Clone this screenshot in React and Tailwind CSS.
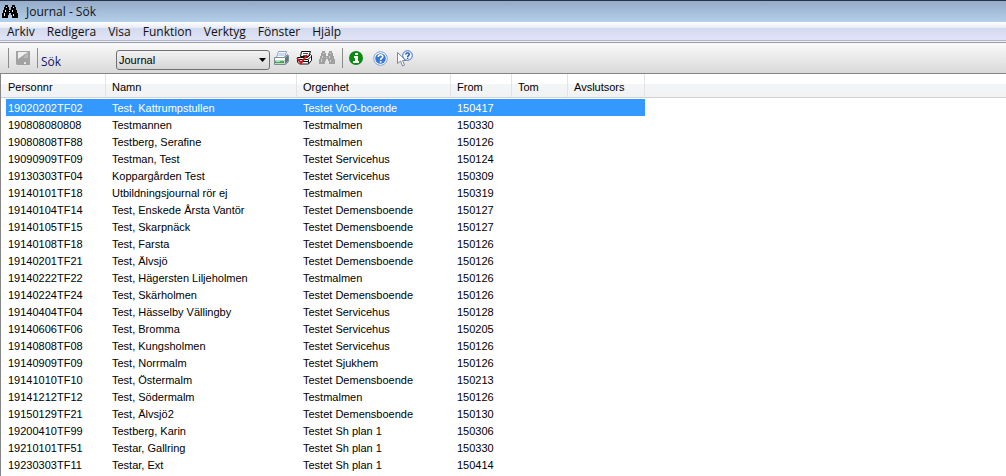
import { useState } from "react";

const MENU = ["Arkiv", "Redigera", "Visa", "Funktion", "Verktyg", "Fönster", "Hjälp"];

const COLUMNS = ["Personnr", "Namn", "Orgenhet", "From", "Tom", "Avslutsors"];

const ROWS = [
  ["19020202TF02", "Test, Kattrumpstullen", "Testet VoO-boende", "150417"],
  ["190808080808", "Testmannen", "Testmalmen", "150330"],
  ["19080808TF88", "Testberg, Serafine", "Testmalmen", "150126"],
  ["19090909TF09", "Testman, Test", "Testet Servicehus", "150124"],
  ["19130303TF04", "Koppargården Test", "Testet Servicehus", "150309"],
  ["19140101TF18", "Utbildningsjournal rör ej", "Testmalmen", "150319"],
  ["19140104TF14", "Test, Enskede Årsta Vantör", "Testet Demensboende", "150127"],
  ["19140105TF15", "Test, Skarpnäck", "Testet Demensboende", "150127"],
  ["19140108TF18", "Test, Farsta", "Testet Demensboende", "150126"],
  ["19140201TF21", "Test, Älvsjö", "Testet Demensboende", "150126"],
  ["19140222TF22", "Test, Hägersten Liljeholmen", "Testmalmen", "150126"],
  ["19140224TF24", "Test, Skärholmen", "Testet Demensboende", "150126"],
  ["19140404TF04", "Test, Hässelby Vällingby", "Testet Servicehus", "150128"],
  ["19140606TF06", "Test, Bromma", "Testet Servicehus", "150205"],
  ["19140808TF08", "Test, Kungsholmen", "Testet Servicehus", "150126"],
  ["19140909TF09", "Test, Norrmalm", "Testet Sjukhem", "150126"],
  ["19141010TF10", "Test, Östermalm", "Testet Demensboende", "150213"],
  ["19141212TF12", "Test, Södermalm", "Testmalmen", "150126"],
  ["19150129TF21", "Test, Älvsjö2", "Testet Demensboende", "150130"],
  ["19200410TF99", "Testberg, Karin", "Testet Sh plan 1", "150306"],
  ["19210101TF51", "Testar, Gallring", "Testet Sh plan 1", "150330"],
  ["19230303TF11", "Testar, Ext", "Testet Sh plan 1", "150414"],
];

function Binoculars({ color, shine }) {
  return (
    <svg width="16" height="16" viewBox="0 0 16 16" shapeRendering="crispEdges" aria-hidden="true">
      <path
        fill={color}
        d="M3 1h3v2h1v3h2V3h1V1h3v2h1v3h1v3h1v5h-6v-3H9V9H7v2H6v3H0V9h1V6h1V3h1z"
      />
      <path
        fill={shine}
        d="M4 3h1v1H4zM3 6h1v2H3zM2 9h1v3H2zM11 3h1v1h-1zM10 6h1v2h-1zM11 10h1v2h-1zM7 7h1v1H7z"
      />
    </svg>
  );
}

function SaveIcon() {
  return (
    <svg width="14" height="14" viewBox="0 0 14 14" aria-hidden="true">
      <path fill="#a2a2a2" d="M0 0h14v14H1L0 13z" />
      <path fill="#efefef" d="M2 1h10L2 8z" />
      <path fill="#b9b9b9" d="M11 2h1v5H7z" />
      <path fill="#e4e4e4" d="M8 11h2v2H8z" />
    </svg>
  );
}

function PrinterIcon() {
  return (
    <svg width="16" height="16" viewBox="0 0 16 16" aria-hidden="true">
      <path fill="#f7fbff" stroke="#8fa5c8" d="M5.500 1.500h8l-2 6h-8z" />
      <path fill="#c3d8f4" d="M6 3h6l-1 3H5z" />
      <path fill="#c9d3d8" stroke="#7b8990" d="M1.500 7.500h10l3-3 1 1v6l-3 3h-11z" />
      <path fill="#5c757e" d="M12 8l3-3v6l-3 3z" />
      <path fill="#fff" d="M2 8h10v2H2z" />
      <path fill="#3eae45" d="M2 11h9v2H2z" />
      <path fill="#a7e69a" d="M3 11h4v1H3z" />
    </svg>
  );
}

function PrinterCheckIcon() {
  return (
    <svg width="16" height="16" viewBox="0 0 16 16" aria-hidden="true">
      <path fill="#fff" stroke="#111" d="M5.500 1.500h9l-2 5h-8z" />
      <path stroke="#555" d="M7 3.500h5M7 5.500h4" />
      <path fill="#fff" stroke="#111" d="M1.500 7.500h10l3-3 1 1v5l-3 3.500h-9l-2-2z" />
      <path fill="none" stroke="#111" d="M2 9.500h10l3-3M12.500 9.500v4M4 11.500h8" />
      <path fill="none" stroke="#d8141c" strokeWidth="2" d="M1 8l4 5 6-8" />
    </svg>
  );
}

function InfoIcon() {
  return (
    <svg width="14" height="14" viewBox="0 0 14 14" aria-hidden="true">
      <circle cx="7" cy="7" r="7" fill="#0c8a10" />
      <path fill="#fff" d="M6 2h3v2H6zM5 5h4v5h1v2H4v-2h2V7H5z" />
    </svg>
  );
}

function HelpIcon() {
  return (
    <svg width="15" height="15" viewBox="0 0 15 15" aria-hidden="true">
      <circle cx="7.500" cy="7.500" r="6.800" fill="#fff" stroke="#7aa0dc" />
      <circle cx="7.500" cy="7.500" r="5.300" fill="#3a78d8" />
      <path fill="none" stroke="#fff" strokeWidth="1.600" d="M5.300 6C5.300 3 10 3.200 9.800 5.700 9.700 7.200 7.600 7.300 7.600 9" />
      <path fill="#fff" d="M6.800 10h1.700v1.600H6.800z" />
    </svg>
  );
}

function ContextHelpIcon() {
  return (
    <svg width="17" height="17" viewBox="0 0 17 17" aria-hidden="true">
      <path fill="#fff" stroke="#7c8798" d="M1.500 2.500v11l3-2.500 2 5 2-1-2-4.500h3.500z" />
      <circle cx="11.500" cy="5.500" r="4.800" fill="#eef4ff" stroke="#3c6fc4" />
      <path fill="none" stroke="#1f4fae" strokeWidth="1.400" d="M9.800 4.500c0-2.200 3.600-2 3.500 0-.1 1.200-1.700 1.200-1.700 2.500" />
      <path fill="#1f4fae" d="M11 7.700h1.300V9H11z" />
    </svg>
  );
}

function Separator() {
  return <span className="h-5 w-px bg-[#8c8c8c]" />;
}

function TitleBar() {
  return (
    <header className="flex h-[22px] items-center gap-2 border-t border-[#26344a] bg-linear-to-b from-[#95abc8] to-[#b4cfea] pl-[2px]">
      <Binoculars color="#000" shine="#e8eef5" />
      <h1 className="text-[12px] leading-4 text-[#10151c]">Journal - Sök</h1>
    </header>
  );
}

function MenuBar() {
  return (
    <nav className="border-b border-[#9a9aa6] bg-white">
      <div className="flex h-[19px] items-center border-b border-[#b4b7cb] bg-[linear-gradient(#ffffff,#e6eaf6_35%,#d4daee_36%,#e0e4f6)] pt-[2px] pl-px">
        {MENU.map((item) => (
          <button key={item} type="button" className="px-[6px] text-[12px] leading-4 text-[#111]">
            {item}
          </button>
        ))}
      </div>
      <div className="h-px bg-[#f0f0f6]" />
    </nav>
  );
}

function Toolbar() {
  const [register, setRegister] = useState("Journal");

  return (
    <div className="flex h-[31px] items-center border-b border-[#868686] bg-linear-to-b from-[#fafafa] to-[#d9d9d9] pl-2 font-['Liberation_Sans',Arial,sans-serif]">
      <Separator />
      <button type="button" aria-label="Spara" className="mx-[7px]" disabled>
        <SaveIcon />
      </button>
      <Separator />
      <label htmlFor="register" className="ml-[3px] w-[75px] pt-2 font-['Open_Sans','Noto_Sans',sans-serif] text-[12px] leading-4 text-[#14146e]">
        Sök
      </label>
      <div className="relative mt-1 w-[154px]">
        <select
          id="register"
          value={register}
          onChange={(e) => setRegister(e.target.value)}
          className="block h-5 w-full appearance-none rounded-[3px] border border-[#707070] bg-linear-to-b from-[#f2f2f2] to-[#d6d6d6] pl-[2px] text-[11px] leading-4 text-black"
        >
          <option>Journal</option>
        </select>
        <svg className="pointer-events-none absolute right-1 top-2" width="7" height="4" viewBox="0 0 7 4" aria-hidden="true">
          <path d="M0 0h7L3.500 4z" />
        </svg>
      </div>
      <div className="ml-[3px] flex items-center gap-[7px]">
        <button type="button" aria-label="Skriv ut"><PrinterIcon /></button>
        <button type="button" aria-label="Skriv ut markerade"><PrinterCheckIcon /></button>
        <button type="button" aria-label="Sök journal" disabled>
          <Binoculars color="#a0a0a0" shine="#d4d4d4" />
        </button>
        <Separator />
      </div>
      <div className="ml-[6px] flex items-center gap-2">
        <button type="button" aria-label="Information"><InfoIcon /></button>
        <button type="button" aria-label="Hjälp" className="ml-[2px]"><HelpIcon /></button>
        <button type="button" aria-label="Förklaring"><ContextHelpIcon /></button>
      </div>
    </div>
  );
}

function JournalTable() {
  const [selected, setSelected] = useState(0);

  return (
    <table className="w-full table-fixed border-separate border-spacing-0 text-left font-['Liberation_Sans',Arial,sans-serif] text-[11px] leading-4 text-black">
      <colgroup>
        <col className="w-[105px]" />
        <col className="w-[191px]" />
        <col className="w-[154px]" />
        <col className="w-[61px]" />
        <col className="w-[56px]" />
        <col className="w-[77px]" />
        <col />
      </colgroup>
      <thead>
        <tr className="h-6 bg-[linear-gradient(#ffffff_42%,#f4f5f7_43%,#f1f2f4)]">
          {COLUMNS.map((name) => (
            <th key={name} scope="col" className="border-r border-b border-r-[#e0e3e8] border-b-[#d2d2d2] p-0 pt-[2px] pl-[6px] font-normal first:pl-[7px]">
              {name}
            </th>
          ))}
          <td className="border-b border-b-[#d2d2d2] p-0" />
        </tr>
      </thead>
      <tbody>
        <tr aria-hidden="true"><td className="h-px p-0" /></tr>
        {ROWS.map((row, i) => {
          const cell = i === selected ? "bg-[#3399ff] text-white" : "";
          return (
            <tr key={row[0]} aria-selected={i === selected} onClick={() => setSelected(i)} className="h-[17px]">
              {COLUMNS.map((name, c) => (
                <td key={name} className={`p-0 pl-[6px] whitespace-nowrap first:border-l-[5px] first:border-white first:pl-[2px] ${cell}`}>
                  {row[c]}
                </td>
              ))}
              <td className="p-0" />
            </tr>
          );
        })}
      </tbody>
    </table>
  );
}

export default function App() {
  return (
    <div className="flex min-h-screen flex-col bg-white font-['Open_Sans','Noto_Sans',sans-serif]">
      <TitleBar />
      <MenuBar />
      <Toolbar />
      <main className="grow border-l border-[#868686]">
        <JournalTable />
      </main>
    </div>
  );
}
